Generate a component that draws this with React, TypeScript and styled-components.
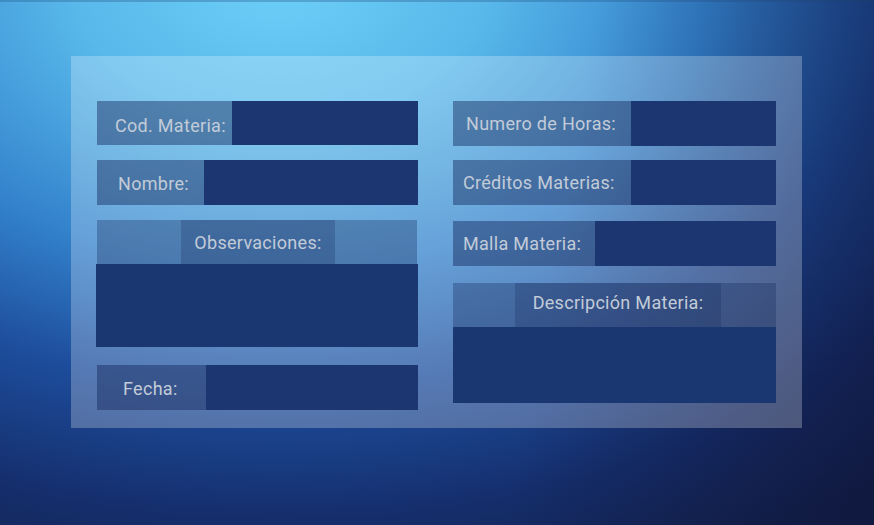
import React from "react";
import styled, { createGlobalStyle } from "styled-components";

const Global = createGlobalStyle`
  html, body { margin: 0; padding: 0; }
  body { font-family: Roboto, "Liberation Sans", sans-serif; }
`;

const Page = styled.div`
  width: 874px;
  height: 525px;
  box-sizing: border-box;
  padding: 56px 72px 0 71px;
  background:
    radial-gradient(ellipse 950px 640px at 280px -20px, #6dd0f8 0%, #58b8ea 22%, #3382cc 45%, #1d4d9c 64%, #152e6c 84%, #13234f 100%),
    #13234f;
  position: relative;
  overflow: hidden;
  box-shadow: inset 0 2px 0 rgba(40, 90, 140, 0.35);
  &::after {
    content: "";
    position: absolute;
    inset: 0;
    pointer-events: none;
    background: linear-gradient(100deg, rgba(10, 15, 50, 0) 62%, rgba(14, 16, 50, 0.5) 100%);
  }
`;

const Panel = styled.form`
  position: relative;
  z-index: 1;
  width: 731px;
  height: 372px;
  box-sizing: border-box;
  padding: 45px 26px 0 26px;
  background: rgba(255, 255, 255, 0.25);
  display: grid;
  grid-template-columns: 321px 323px;
  column-gap: 35px;
  align-items: start;
`;

const Column = styled.div`
  display: flex;
  flex-direction: column;
`;

const Row = styled.div<{ $top?: number; $h?: number }>`
  display: flex;
  height: ${(p) => p.$h ?? 44}px;
  margin-top: ${(p) => p.$top ?? 0}px;
`;

const Label = styled.label<{ $w: number; $pl: number; $pt?: number }>`
  flex: 0 0 ${(p) => p.$w}px;
  box-sizing: border-box;
  padding-left: ${(p) => p.$pl}px;
  padding-top: ${(p) => p.$pt ?? 0}px;
  display: flex;
  align-items: center;
  background: rgba(20, 40, 90, 0.45);
  color: #c2cbd8;
  font-size: 18px;
  font-weight: 400;
  letter-spacing: 0.3px;
  white-space: nowrap;
`;

const Input = styled.input`
  flex: 1;
  min-width: 0;
  border: 0;
  outline: none;
  margin: 0;
  padding: 0 8px;
  background: #1b3671;
  color: #c9d1dc;
`;

const Block = styled.div<{ $top: number; $out: number }>`
  display: flex;
  flex-direction: column;
  margin-top: ${(p) => p.$top}px;
  margin-left: -${(p) => p.$out}px;
`;

const HeaderBar = styled.div<{ $pl: number; $inset: number }>`
  height: 44px;
  margin: 0 ${(p) => p.$inset}px;
  padding-left: ${(p) => p.$pl}px;
  display: flex;
  background: rgba(20, 40, 90, 0.32);
`;

const HeaderLabel = styled.label<{ $w: number; $pb?: number }>`
  width: ${(p) => p.$w}px;
  box-sizing: border-box;
  padding-bottom: ${(p) => p.$pb ?? 0}px;
  display: flex;
  align-items: center;
  justify-content: center;
  background: rgba(20, 40, 90, 0.25);
  color: #c2cbd8;
  font-size: 18px;
  font-weight: 400;
  letter-spacing: 0.3px;
  white-space: nowrap;
`;

const TextArea = styled.textarea<{ $h: number }>`
  height: ${(p) => p.$h}px;
  box-sizing: border-box;
  border: 0;
  outline: none;
  margin: 0;
  padding: 8px;
  resize: none;
  background: #1b3772;
  color: #c9d1dc;
  font-family: inherit;
`;

export default function App() {
  return (
    <>
      <Global />
      <Page>
        <Panel>
          <Column>
            <Row>
              <Label $w={135} $pl={18} $pt={4}>Cod. Materia:</Label>
              <Input />
            </Row>
            <Row $top={15} $h={45}>
              <Label $w={107} $pl={21} $pt={2}>Nombre:</Label>
              <Input />
            </Row>
            <Block $top={15} $out={1}>
              <HeaderBar $pl={84} $inset={1}>
                <HeaderLabel $w={154}>Observaciones:</HeaderLabel>
              </HeaderBar>
              <TextArea $h={83} />
            </Block>
            <Row $top={18} $h={45}>
              <Label $w={109} $pl={26} $pt={2}>Fecha:</Label>
              <Input />
            </Row>
          </Column>
          <Column>
            <Row $h={45}>
              <Label $w={178} $pl={13}>Numero de Horas:</Label>
              <Input />
            </Row>
            <Row $top={14} $h={45}>
              <Label $w={178} $pl={10}>Créditos Materias:</Label>
              <Input />
            </Row>
            <Row $top={16} $h={45}>
              <Label $w={142} $pl={10}>Malla Materia:</Label>
              <Input />
            </Row>
            <Block $top={17} $out={0}>
              <HeaderBar $pl={62} $inset={0}>
                <HeaderLabel $w={206} $pb={5}>Descripción Materia:</HeaderLabel>
              </HeaderBar>
              <TextArea $h={76} />
            </Block>
          </Column>
        </Panel>
      </Page>
    </>
  );
}
